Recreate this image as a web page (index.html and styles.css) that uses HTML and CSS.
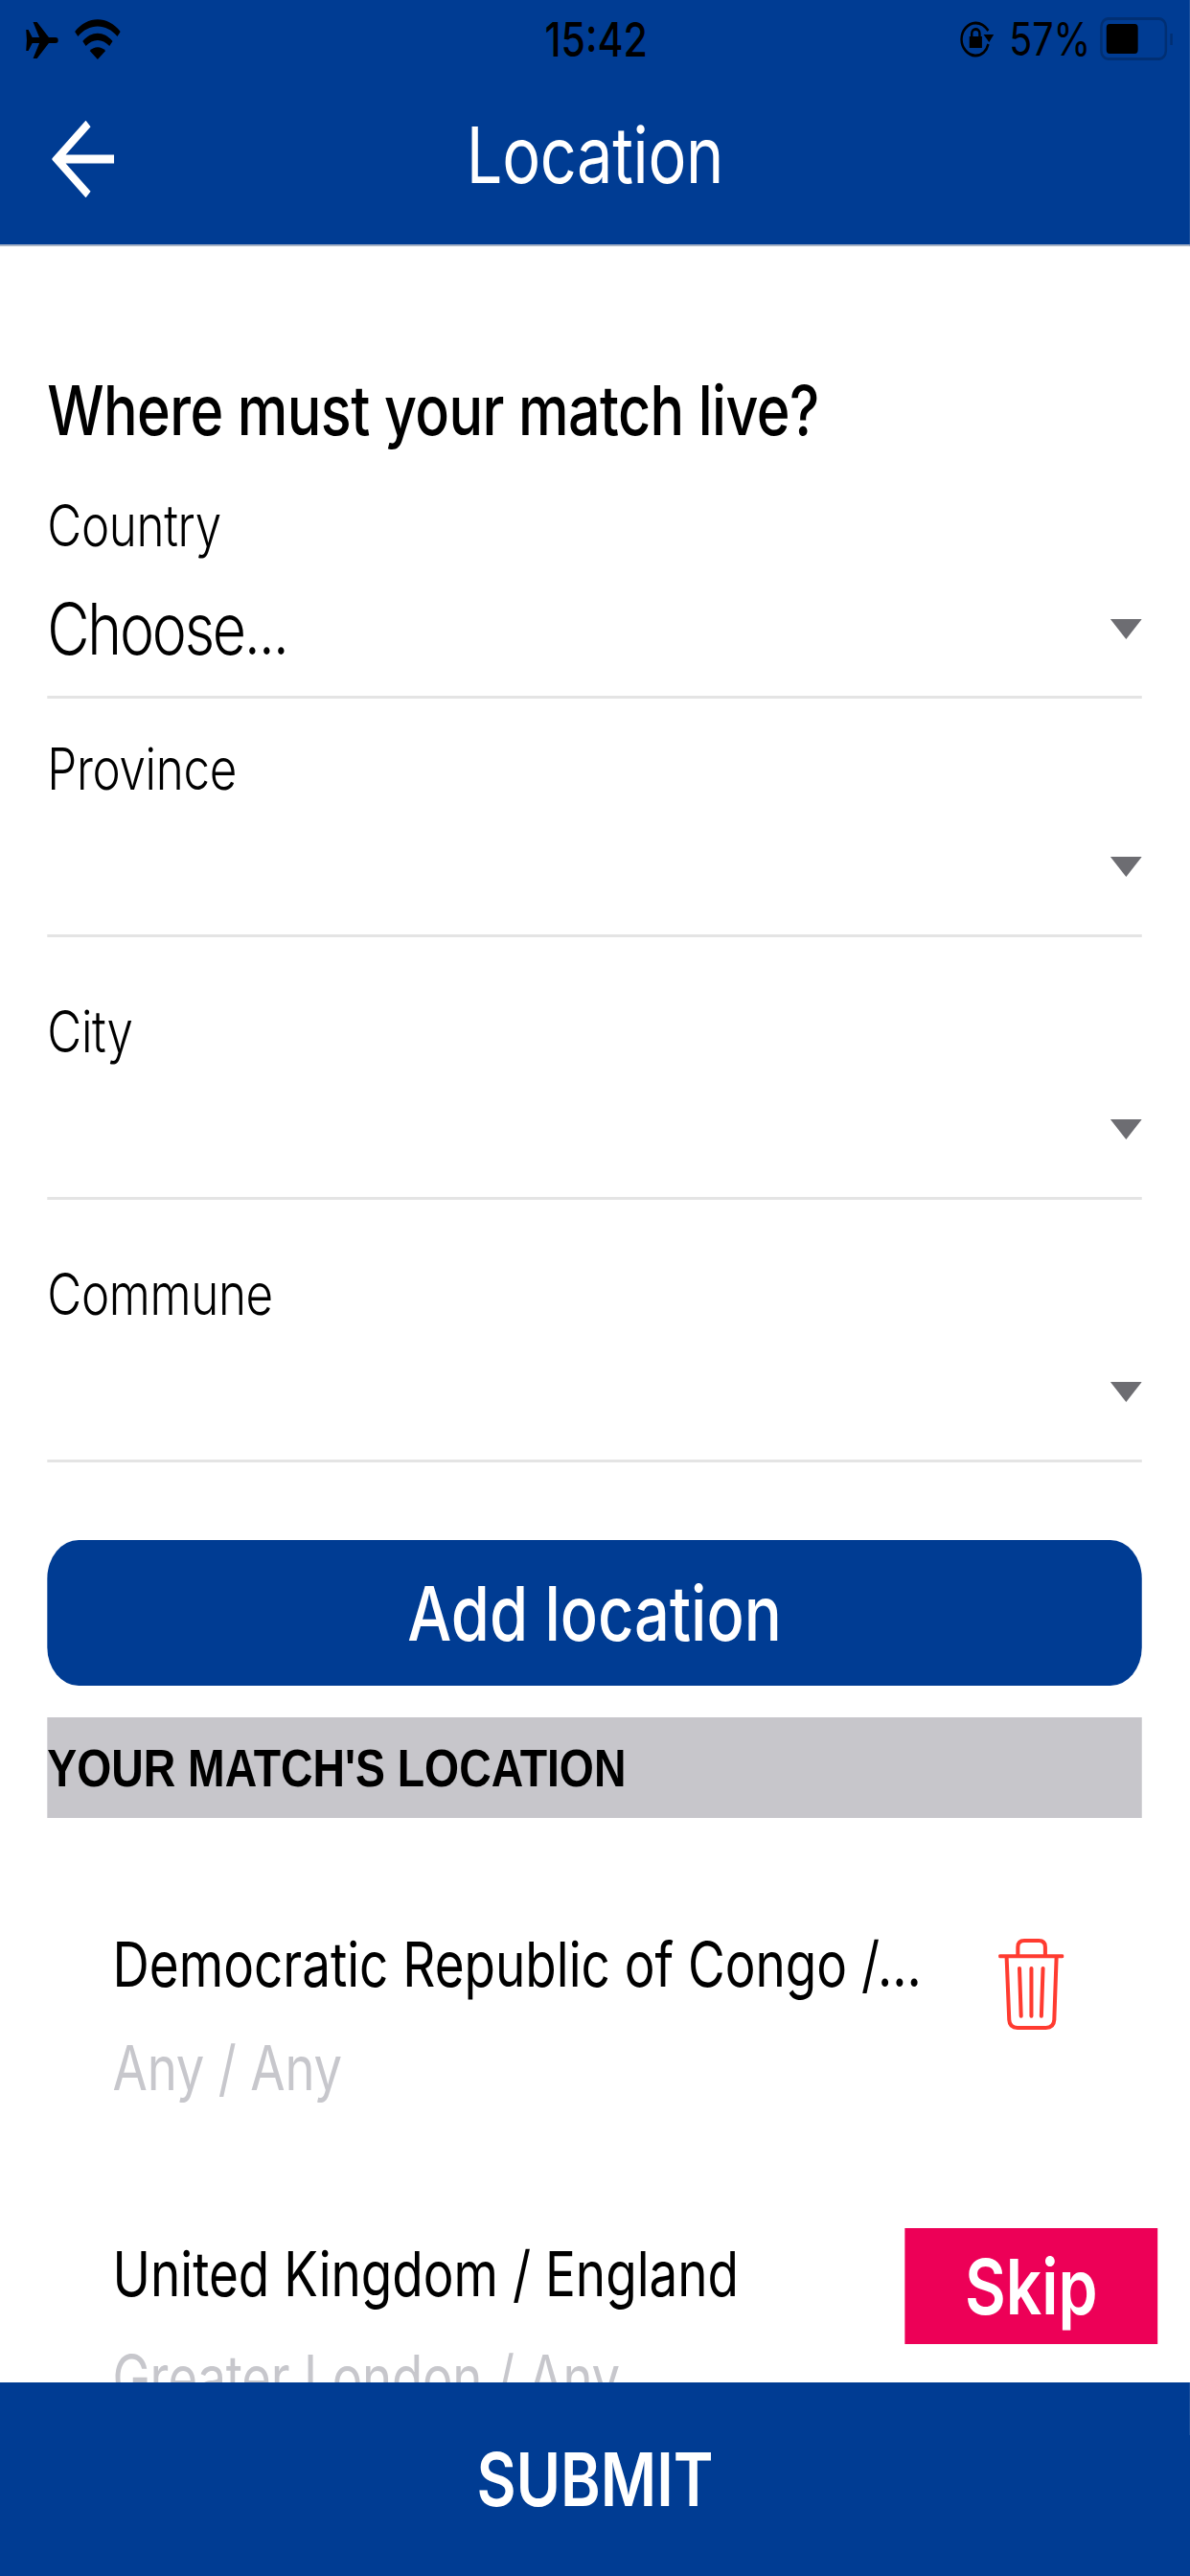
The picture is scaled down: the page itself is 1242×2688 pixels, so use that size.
FILE: index.html
```html
<!DOCTYPE html>
<html lang="en">
<head>
<meta charset="utf-8">
<title>Location</title>
<link rel="stylesheet" href="styles.css">
</head>
<body>
<div class="stage">
<div class="app">
  <div class="statusbar">
    <div class="status-left">
      <svg class="ic-plane" viewBox="0 0 41 38" preserveAspectRatio="none"><path fill="#000" d="M0 8h3l5 8h9L9 0h5l15 16h8c3 0 4 1 4 3s-1 3-4 3h-8L14 38H9l8-16H8l-5 8H0l1-11z"/></svg>
      <svg class="ic-wifi" viewBox="0 0 58 42" preserveAspectRatio="none"><path fill="#000" d="M0 13C16-4 42-4 58 13l-4 5C40 4 18 4 4 18z"/><path fill="#000" d="M10 23c11-11 27-11 38 0l-4 5c-9-8-21-8-30 0z"/><path fill="#000" d="M19 33c6-5 14-5 20 0L29 42z"/></svg>
    </div>
    <div class="status-time">15:42</div>
    <div class="status-right">
      <svg class="ic-lock" viewBox="0 0 43 38" preserveAspectRatio="none"><path fill="none" stroke="#000" stroke-width="3" d="M36 10C31 4 26 2 20 2 10 2 2 10 2 19s8 17 18 17c8 0 14-5 16-12"/><path fill="#000" d="M30 14h13l-6 8z"/><rect x="12" y="16" width="16" height="12" fill="#000"/><path fill="none" stroke="#000" stroke-width="3" d="M15 16v-3c0-6 10-6 10 0v3"/></svg>
      <span class="status-pct">57%</span>
      <div class="battery"><div class="battery-fill"></div></div>
      <div class="battery-nub"></div>
    </div>
  </div>
  <header class="topbar">
    <svg class="ic-back" viewBox="0 0 79 80"><path fill="none" stroke="#fff" stroke-width="9" d="M46 3L6 40l40 37M6 40h73"/></svg>
    <h1 class="topbar-title">Location</h1>
    <div></div>
  </header>
  <main class="content">
    <h2 class="question">Where must your match live?</h2>
    <div class="field field-first">
      <div class="field-label">Country</div>
      <div class="field-row"><span class="field-value">Choose...</span><svg class="ic-caret" viewBox="0 0 40 21"><path fill="#6d6d72" d="M0 0h40L20 21z"/></svg></div>
      <div class="rule"></div>
    </div>
    <div class="field">
      <div class="field-label">Province</div>
      <div class="field-row"><span class="field-value"></span><svg class="ic-caret" viewBox="0 0 40 21"><path fill="#6d6d72" d="M0 0h40L20 21z"/></svg></div>
      <div class="rule"></div>
    </div>
    <div class="field field-wide">
      <div class="field-label">City</div>
      <div class="field-row"><span class="field-value"></span><svg class="ic-caret" viewBox="0 0 40 21"><path fill="#6d6d72" d="M0 0h40L20 21z"/></svg></div>
      <div class="rule"></div>
    </div>
    <div class="field field-wide">
      <div class="field-label">Commune</div>
      <div class="field-row"><span class="field-value"></span><svg class="ic-caret" viewBox="0 0 40 21"><path fill="#6d6d72" d="M0 0h40L20 21z"/></svg></div>
      <div class="rule"></div>
    </div>
    <button class="add-btn">Add location</button>
    <div class="section-head">YOUR MATCH'S LOCATION</div>
    <ul class="loc-list">
      <li class="loc-item">
        <div class="loc-text">
          <div class="loc-title">Democratic Republic of Congo /...</div>
          <div class="loc-sub">Any / Any</div>
        </div>
        <svg class="ic-trash" viewBox="0 0 203 286" preserveAspectRatio="none"><g fill="none" stroke="#ff3b30" stroke-width="12" stroke-linecap="round"><path d="M5 55h193M60 55V26C60 12 68 6 80 6h45c12 0 20 6 20 20v29M25 55l8 200c1 18 10 25 26 25h88c16 0 25-7 26-25l7-200M65 93l5 150M102 93v150M138 93l-5 150"/></g></svg>
      </li>
      <li class="loc-item">
        <div class="loc-text">
          <div class="loc-title">United Kingdom / England</div>
          <div class="loc-sub">Greater London / Any</div>
        </div>
      </li>
    </ul>
  </main>
  <button class="skip">Skip</button>
  <footer class="submit">SUBMIT</footer>
</div>
</div>
</body>
</html>
```
FILE: styles.css
```css
html, body { margin: 0; padding: 0; background: #fff; }
* { box-sizing: border-box; }

.stage { width: 1242px; height: 2688px; overflow: hidden; }

/* The source is a phone capture stretched taller than it is wide: everything is laid out
   on a wider canvas, then squeezed horizontally to the final 1242px. */
.app {
  position: relative;
  width: 1511px;
  height: 2688px;
  display: flex;
  flex-direction: column;
  transform: scaleX(0.8219);
  transform-origin: 0 0;
  font-family: Inter, "Liberation Sans", sans-serif;
  color: #000;
}

.statusbar {
  height: 81px;
  flex: none;
  background: #003c93;
  display: grid;
  grid-template-columns: 1fr auto 1fr;
  align-items: center;
  padding: 0 22px 0 33px;
}
.status-left, .status-right { display: flex; align-items: center; }
.status-right { justify-content: flex-end; }
.ic-plane { width: 41px; height: 38px; margin-top: 3px; }
.ic-wifi { width: 58px; height: 42px; margin-left: 21px; }
.status-time { font-size: 50px; font-weight: 500; line-height: 1; margin-right: 8px; }
.ic-lock { width: 43px; height: 38px; }
.status-pct { font-size: 48px; line-height: 1; margin-left: 20px; }
.battery {
  width: 85px;
  height: 45px;
  margin-left: 12px;
  border: 3px solid #012f73;
  border-radius: 10px;
  padding: 4px 5px;
}
.battery-fill { width: 40px; height: 100%; background: #000; border-radius: 4px; }
.battery-nub { width: 3px; height: 12px; margin-left: 4px; background: #012f73; }

.topbar {
  height: 176px;
  flex: none;
  background: #003c93;
  border-bottom: 2px solid #a9b4c6;
  display: grid;
  grid-template-columns: 1fr auto 1fr;
  align-items: center;
  padding-left: 66px;
}
.ic-back { width: 79px; height: 80px; margin-bottom: 4px; }
.topbar-title {
  margin: 0 0 10px -66px;
  font-size: 81px;
  font-weight: 400;
  letter-spacing: -0.4px;
  color: #fff;
  line-height: 1.2;
}

.content {
  flex: 1;
  min-height: 0;
  overflow: hidden;
  padding: 123px 61px 0 60px;
}
.question {
  margin: 0;
  font-size: 72px;
  font-weight: 500;
  letter-spacing: -0.7px;
  line-height: 96px;
}

.field { padding-top: 33px; }
.field-first { padding-top: 32px; }
.field-wide { padding-top: 58px; }
.field-label { font-size: 60px; font-weight: 300; letter-spacing: -0.4px; line-height: 80px; }
.field-row {
  height: 124px;
  display: flex;
  align-items: center;
  justify-content: space-between;
}
.field-first .field-row { height: 136px; }
.field-value { font-size: 74px; font-weight: 300; letter-spacing: -2.7px; }
.ic-caret { width: 40px; height: 21px; flex: none; }
.rule { height: 3px; margin-top: 9px; background: #e4e4e4; }
.field-first .rule { margin-top: 2px; }

.add-btn {
  display: block;
  width: 100%;
  height: 152px;
  margin-top: 81px;
  border: 0;
  border-radius: 40px;
  background: #003c93;
  color: #fff;
  font-family: inherit;
  font-size: 79px;
  font-weight: 500;
}
.section-head {
  height: 105px;
  margin-top: 33px;
  background: #c7c6cb;
  display: flex;
  align-items: center;
  font-family: "Liberation Sans", Arial, sans-serif;
  font-size: 56.4px;
  font-weight: 700;
}

.loc-list { list-style: none; margin: 0; padding: 109px 99px 0 83px; }
.loc-item { height: 323px; display: flex; justify-content: space-between; align-items: flex-start; }
.loc-title { font-size: 64.5px; font-weight: 400; line-height: 88px; white-space: nowrap; }
.loc-sub { font-size: 64px; letter-spacing: -0.2px; line-height: 88px; margin-top: 20px; color: #c7c7cc; white-space: nowrap; }
.ic-trash { width: 83px; height: 95px; margin-top: 17px; flex: none; }

.skip {
  position: absolute;
  right: 41px;
  top: 2325px;
  width: 321px;
  height: 121px;
  border: 0;
  background: #ed0057;
  color: #fff;
  font-family: inherit;
  font-size: 80px;
  font-weight: 600;
}
.submit {
  height: 202px;
  flex: none;
  background: #003c93;
  color: #fff;
  display: flex;
  align-items: center;
  justify-content: center;
  font-size: 77px;
  font-weight: 600;
}
```
